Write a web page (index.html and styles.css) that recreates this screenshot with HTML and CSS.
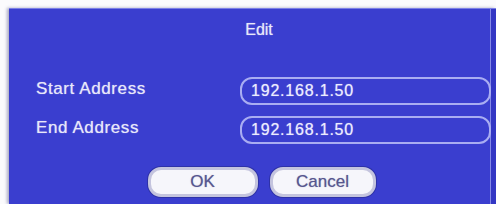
FILE: index.html
```html
<!DOCTYPE html>
<html lang="en">

<head>
    <meta charset="UTF-8">
    <meta name="viewport" content="width=device-width, initial-scale=1.0">
    <title>Edit</title>
    <link rel="stylesheet" href="styles.css">
</head>

<body>
    <div class="dialog">
        <div class="title">Edit</div>

        <div class="fields">
            <div class="row">
                <label class="label" for="startAddr">Start Address</label>
                <input class="field" id="startAddr" type="text" value="192.168.1.50">
            </div>
            <div class="row">
                <label class="label" for="endAddr">End Address</label>
                <input class="field" id="endAddr" type="text" value="192.168.1.50">
            </div>
        </div>

        <div class="buttons">
            <button class="button ok">OK</button>
            <button class="button cancel">Cancel</button>
        </div>
    </div>
</body>

</html>
```

FILE: styles.css
```css
body {
    font-family: "Liberation Sans", Arial, sans-serif;
    margin: 0;
    background-color: #fbfbfd;
    height: 100vh;
    overflow: hidden;
}

.dialog {
    margin: 8px 0 0 9px;
    height: calc(100vh - 8px);
    box-sizing: border-box;
    background-color: #3a3ecf;
    border-top: 1px solid #7a7ee6;
    padding: 12px 5px 0 0;
    box-shadow: inset -5px 0 0 #3337c4, inset -6px 0 0 #8589e8, -2px 0 3px rgba(20, 20, 90, 0.35);
    color: #e8e8fa;
    text-shadow: 0 0 1px rgba(232, 232, 250, 0.7);
}

.title {
    font-size: 16px;
    line-height: 18px;
    text-align: center;
    padding-left: 18px;
}

.fields {
    display: flex;
    flex-direction: column;
    gap: 11px;
    margin-top: 38px;
    padding-left: 27px;
}

.row {
    display: flex;
    align-items: center;
}

.label {
    width: 204px;
    font-size: 17px;
    letter-spacing: 0.6px;
    padding-bottom: 4px;
}

.field {
    width: 251px;
    height: 28px;
    box-sizing: border-box;
    border: 2px solid #a9adf2;
    border-radius: 12px;
    background-color: transparent;
    color: #ececff;
    font-family: inherit;
    font-size: 16px;
    letter-spacing: 0.8px;
    padding: 0 0 0 9px;
    outline: none;
    text-shadow: inherit;
}

.buttons {
    display: flex;
    justify-content: center;
    gap: 12px;
    margin-top: 23px;
    padding-left: 23px;
}

.button {
    height: 30px;
    background-color: #f6f6fb;
    border: 3px solid #c4c4de;
    border-radius: 13px;
    box-shadow: 0 0 0 1px #2e32a8;
    color: #56568f;
    font-family: inherit;
    font-size: 17px;
    padding: 0;
    text-shadow: 0 0 1px rgba(86, 86, 143, 0.6);
}

.ok {
    width: 110px;
}

.cancel {
    width: 106px;
}
```
